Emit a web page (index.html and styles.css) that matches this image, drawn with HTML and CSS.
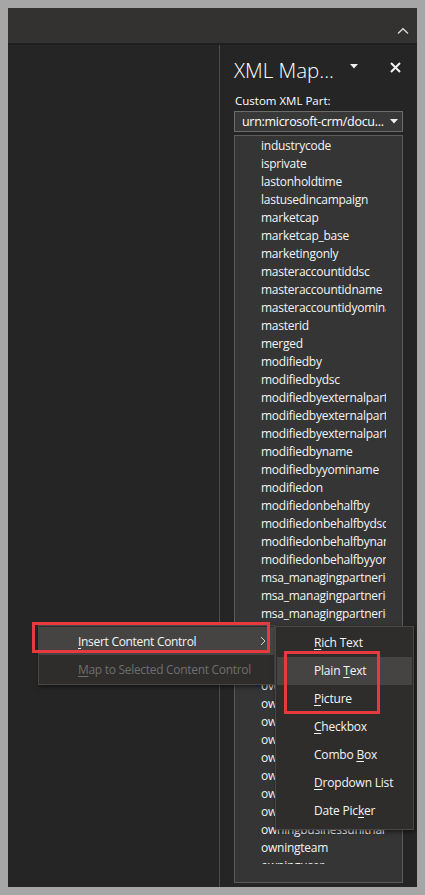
FILE: index.html
```html
<!DOCTYPE html>
<html>
<head>
<meta charset="utf-8">
<link rel="stylesheet" href="styles.css">
</head>
<body>
<div class="frame">
  <div class="topbar">
    <svg class="chev" width="12" height="8" viewBox="0 0 12 8"><path d="M1 6.5 L6 1.8 L11 6.5" fill="none" stroke="#d8d8d8" stroke-width="1.4"/></svg>
  </div>
  <div class="sep"></div>
  <div class="main">
    <div class="doc"></div>
    <div class="splitter"></div>
    <div class="pane">
      <div class="pane-head">
        <span class="pane-title">XML Map...</span>
        <svg class="caret" width="8" height="5" viewBox="0 0 8 5"><path d="M0 0 H8 L4 4.5 Z" fill="#f0f0f0"/></svg>
        <svg class="close" width="11" height="11" viewBox="0 0 11 11"><path d="M1 1 L10 10 M10 1 L1 10" stroke="#f4f4f4" stroke-width="2"/></svg>
      </div>
      <div class="label">Custom XML Part:</div>
      <div class="combo">
        <span class="combo-text">urn:microsoft-crm/docu...</span>
        <svg width="8" height="5" viewBox="0 0 8 5"><path d="M0 0 H8 L4 4.5 Z" fill="#f0f0f0"/></svg>
      </div>
      <div class="list">
        <div class="list-inner">
          <div class="item">industrycode</div>
          <div class="item">isprivate</div>
          <div class="item">lastonholdtime</div>
          <div class="item">lastusedincampaign</div>
          <div class="item">marketcap</div>
          <div class="item">marketcap_base</div>
          <div class="item">marketingonly</div>
          <div class="item">masteraccountiddsc</div>
          <div class="item">masteraccountidname</div>
          <div class="item">masteraccountidyominame</div>
          <div class="item">masterid</div>
          <div class="item">merged</div>
          <div class="item">modifiedby</div>
          <div class="item">modifiedbydsc</div>
          <div class="item">modifiedbyexternalparty</div>
          <div class="item">modifiedbyexternalpartyname</div>
          <div class="item">modifiedbyexternalpartyyominame</div>
          <div class="item">modifiedbyname</div>
          <div class="item">modifiedbyyominame</div>
          <div class="item">modifiedon</div>
          <div class="item">modifiedonbehalfby</div>
          <div class="item">modifiedonbehalfbydsc</div>
          <div class="item">modifiedonbehalfbyname</div>
          <div class="item">modifiedonbehalfbyyominame</div>
          <div class="item">msa_managingpartnerid</div>
          <div class="item">msa_managingpartneridname</div>
          <div class="item">msa_managingpartneridyominame</div>
          <div class="item">originatingleadid</div>
          <div class="item">originatingleadidname</div>
          <div class="item">originatingleadidyominame</div>
          <div class="item">overriddencreatedon</div>
          <div class="item">ownerid</div>
          <div class="item">owneriddsc</div>
          <div class="item">owneridname</div>
          <div class="item">owneridtype</div>
          <div class="item">owneridyominame</div>
          <div class="item">ownershipcode</div>
          <div class="item">owningbusinessunit</div>
          <div class="item">owningbusinessunitname</div>
          <div class="item">owningteam</div>
          <div class="item">owninguser</div>
        </div>
      </div>
    </div>
  </div>

  <div class="menu">
    <div class="mi active"><span class="mi-text"><u>I</u>nsert Content Control</span><svg class="arrow" width="6" height="10" viewBox="0 0 6 10"><path d="M1 1 L5 5 L1 9" fill="none" stroke="#d0d0d0" stroke-width="1"/></svg></div>
    <div class="mi disabled"><span class="mi-text"><u>M</u>ap to Selected Content Control</span></div>
  </div>
  <div class="hl hl-main"></div>

  <div class="submenu">
    <div class="si"><u>R</u>ich Text</div>
    <div class="si hover">Plain <u>T</u>ext</div>
    <div class="si"><u>P</u>icture</div>
    <div class="si"><u>C</u>heckbox</div>
    <div class="si">Combo <u>B</u>ox</div>
    <div class="si"><u>D</u>ropdown List</div>
    <div class="si">Date Pic<u>k</u>er</div>
  </div>
  <div class="hl hl-sub"></div>
</div>
</body>
</html>
```
FILE: styles.css
```css
html, body {
  margin: 0;
  padding: 0;
  background: #a6a6a6;
}
body {
  width: 425px;
  height: 895px;
  overflow: hidden;
  font-family: "Open Sans", "Noto Sans", sans-serif;
}
.frame {
  position: relative;
  margin: 8px 0 0 8px;
  width: 409px;
  height: 879px;
  background: #252525;
  display: flex;
  flex-direction: column;
  overflow: hidden;
}
.topbar {
  height: 35px;
  background: #333231;
  display: flex;
  justify-content: flex-end;
  align-items: flex-end;
  padding: 0 8px 8px 0;
  box-sizing: border-box;
}
.chev { display: block; }
.sep {
  height: 2px;
  background: #1f1f1f;
}
.main {
  flex: 1;
  display: flex;
  min-height: 0;
}
.doc {
  width: 211px;
  flex-shrink: 0;
  background: #252525;
}
.splitter {
  width: 1px;
  flex-shrink: 0;
  background: #4e4e4e;
}
.pane {
  width: 197px;
  flex-shrink: 0;
  box-sizing: border-box;
  display: flex;
  flex-direction: column;
  padding: 0 14px 4px 14px;
  min-height: 0;
  color: #ffffff;
}
.pane-head {
  height: 48px;
  display: flex;
  align-items: center;
  padding-top: 2px;
  box-sizing: border-box;
}
.pane-title {
  font-size: 20.5px;
  font-weight: 300;
  color: #ffffff;
  width: 115px;
  flex-shrink: 0;
  white-space: nowrap;
}
.caret { margin-left: 1px; margin-top: -7px; flex-shrink: 0; }
.close { margin-left: 32px; margin-top: -6px; flex-shrink: 0; }
.label {
  font-size: 11.5px;
  height: 16px;
  line-height: 16px;
  padding-left: 1px;
  margin-bottom: 2px;
}
.combo {
  height: 21px;
  box-sizing: border-box;
  border: 1px solid #6c6c6c;
  background: #383838;
  display: flex;
  align-items: center;
  justify-content: space-between;
  padding: 0 4px 0 7px;
  margin-bottom: 3px;
}
.combo-text {
  font-size: 12.5px;
  letter-spacing: -0.3px;
  white-space: nowrap;
}
.list {
  flex: 1;
  min-height: 0;
  border: 1px solid #5c5c5c;
  background: #353535;
  padding: 1px 0 18px 26px;
  display: flex;
  flex-direction: column;
}
.list-inner {
  flex: 1;
  min-height: 0;
  overflow: hidden;
}
.item {
  width: 125px;
  height: 18px;
  line-height: 18px;
  font-size: 12px;
  letter-spacing: -0.25px;
  white-space: nowrap;
  overflow: hidden;
  color: #f4f4f4;
}

/* context menu */
.menu {
  position: absolute;
  left: 30px;
  top: 617px;
  width: 237px;
  box-sizing: border-box;
  background: #2e2d2c;
  border: 1px solid #474747;
  box-shadow: 1px 2px 4px rgba(0,0,0,0.5);
  padding: 1px 0 1px 0;
  font-size: 12px;
  letter-spacing: -0.3px;
  color: #f4f4f4;
}
.mi {
  height: 28px;
  display: flex;
  align-items: center;
  justify-content: space-between;
  padding: 0 8px 0 39px;
}
.mi.active { background: #454443; }
.mi.disabled { color: #6e6e6e; }
.arrow { display: block; }
u { text-decoration-thickness: 1px; text-underline-offset: 2px; }

.submenu {
  position: absolute;
  left: 267px;
  top: 618px;
  width: 139px;
  box-sizing: border-box;
  background: #2e2d2c;
  border: 1px solid #474747;
  box-shadow: 1px 2px 4px rgba(0,0,0,0.5);
  padding: 2px 0 4px 0;
  font-size: 12px;
  letter-spacing: -0.2px;
  color: #f4f4f4;
}
.si {
  height: 28px;
  line-height: 28px;
  padding-left: 37px;
  margin: 0 1px;
}
.si.hover { background: #454443; }

.hl {
  position: absolute;
  border: 3px solid #e8393f;
  box-sizing: border-box;
}
.hl-main {
  left: 24px;
  top: 614px;
  width: 238px;
  height: 31px;
}
.hl-sub {
  left: 276px;
  top: 643px;
  width: 96px;
  height: 63px;
}
```
